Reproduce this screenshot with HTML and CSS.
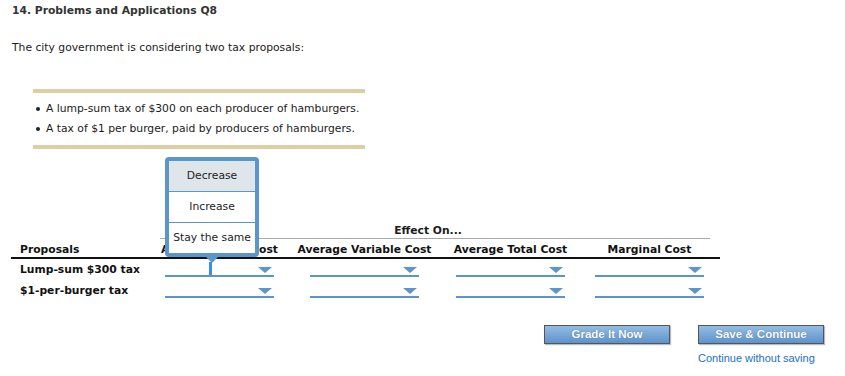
FILE: index.html
```html
<!DOCTYPE HTML>
<html>
<head>
<meta charset="utf-8">
<title>Problems and Applications Q8</title>
<link rel="stylesheet" href="styles.css">
</head>

<body>
<div class="page">
    <h1 class="title">14. Problems and Applications Q8</h1>
    <p class="intro">The city government is considering two tax proposals:</p>

    <ul class="proposals">
        <li>A lump-sum tax of $300 on each producer of hamburgers.</li>
        <li>A tax of $1 per burger, paid by producers of hamburgers.</li>
    </ul>

    <div class="effect">
        <div class="effect-head"><span>Effect On...</span></div>

        <div class="row head">
            <div class="name">Proposals</div>
            <div class="col"><span>Average Fixed Cost</span></div>
            <div class="col"><span>Average Variable Cost</span></div>
            <div class="col"><span>Average Total Cost</span></div>
            <div class="col"><span>Marginal Cost</span></div>
        </div>

        <div class="row">
            <div class="name">Lump-sum $300 tax</div>
            <div class="col">
                <div class="select open">
                    <span class="caret"></span>
                    <i class="arrow"></i>
                    <!-- 展开的下拉菜单 -->
                    <ul class="menu">
                        <li class="hover">Decrease</li>
                        <li>Increase</li>
                        <li>Stay the same</li>
                    </ul>
                </div>
            </div>
            <div class="col"><div class="select"><i class="arrow"></i></div></div>
            <div class="col"><div class="select"><i class="arrow"></i></div></div>
            <div class="col"><div class="select"><i class="arrow"></i></div></div>
        </div>

        <div class="row">
            <div class="name">$1-per-burger tax</div>
            <div class="col"><div class="select"><i class="arrow"></i></div></div>
            <div class="col"><div class="select"><i class="arrow"></i></div></div>
            <div class="col"><div class="select"><i class="arrow"></i></div></div>
            <div class="col"><div class="select"><i class="arrow"></i></div></div>
        </div>
    </div>

    <div class="actions">
        <a class="btn" href="javascript:;">Grade It Now</a>
        <div class="save">
            <a class="btn" href="javascript:;">Save &amp; Continue</a>
            <a class="link" href="javascript:;">Continue without saving</a>
        </div>
    </div>
</div>
</body>
</html>
```

FILE: styles.css
```css
* {margin:0; padding:0; box-sizing:border-box;}
body {font-family:"DejaVu Sans", Verdana, sans-serif; font-size:10.75px; color:#1b1b1b; background:#fff;}

.page {padding:4px 12px 0 12px;}

.title {font-size:10.75px; line-height:13px; font-weight:bold; color:#333;}
.intro {margin-top:24px; line-height:13px;}

/* 两条土黄色的线夹住列表 */
.proposals {list-style:none; width:332px; margin:35px 0 0 21px; padding:6px 0;
    border-top:4px solid #dccfa4; border-bottom:4px solid #dccfa4;}
.proposals li {display:flex; align-items:center; line-height:20px; white-space:nowrap;}
.proposals li:before {content:""; width:4px; height:4px; border-radius:50%; background:#222; margin:0 6px 0 3px;}

/* 表格：5列，后4列里下拉框宽109px */
.effect {width:709px; margin:75px 0 0 -1px;}
.effect-head {margin-left:149px; width:550px; padding-right:14px; text-align:center;
    line-height:13px; font-weight:bold; padding-bottom:1px; border-bottom:1px solid #aaa;}
.row {display:grid; grid-template-columns:154px 145px 146px 139px 125px; height:17px; margin-bottom:4px;}
.row.head {height:auto; margin-bottom:0; padding:4px 0 1px; border-bottom:2px solid #111; font-weight:bold; line-height:13px;}
.row .name {padding:3px 0 0 9px; line-height:13px; font-weight:bold; color:#111;}
.row.head .name {padding-top:0;}
.row .col {width:109px; display:flex; justify-content:center; white-space:nowrap; color:#111;}
.row.head + .row {margin-top:1px;}

.select {position:relative; width:109px; height:17px; border-bottom:2px solid #5b95c9;
    display:flex; justify-content:flex-end; align-items:flex-start; padding:7px 2px 0 0;}
.arrow {width:0; height:0; border-left:7px solid transparent; border-right:7px solid transparent; border-top:6px solid #5b95c9;}
.caret {position:absolute; left:44px; top:2px; width:3px; height:13px; background:#3a8ee6;}

.menu {position:absolute; left:0; top:-103px; width:94px; list-style:none; background:#fff;
    border:4px solid #5b96c8; border-radius:4px; z-index:2;}
.menu:after {content:""; position:absolute; left:37px; bottom:-10px; width:0; height:0;
    border-left:6px solid transparent; border-right:6px solid transparent; border-top:6px solid #5b96c8;}
.menu li {height:31px; line-height:30px; text-align:center; color:#222; border-bottom:1px solid #5b96c8;}
.menu li:last-child {border-bottom:none; height:30px;}
.menu li.hover {background:#dfe6ea;}

/* 按钮 */
.actions {display:flex; justify-content:flex-end; gap:28px; margin-top:27px; padding-right:9px;}
.btn {display:block; width:126px; height:19px; line-height:17px; text-align:center; color:#fff; font-weight:bold;
    font-family:"Liberation Sans", Arial, sans-serif; font-size:11.5px;
    text-decoration:none; border:1px solid #555; background:linear-gradient(#94bde3, #5d92cc);
    text-shadow:0 0 1px #3a5f8a; box-shadow:1px 1px 1px #bbb;}
.save {display:flex; flex-direction:column;}
.link {margin-top:8px; font-family:"Liberation Sans", Arial, sans-serif; font-size:11px; color:#1a70c6; text-decoration:none;}
```
